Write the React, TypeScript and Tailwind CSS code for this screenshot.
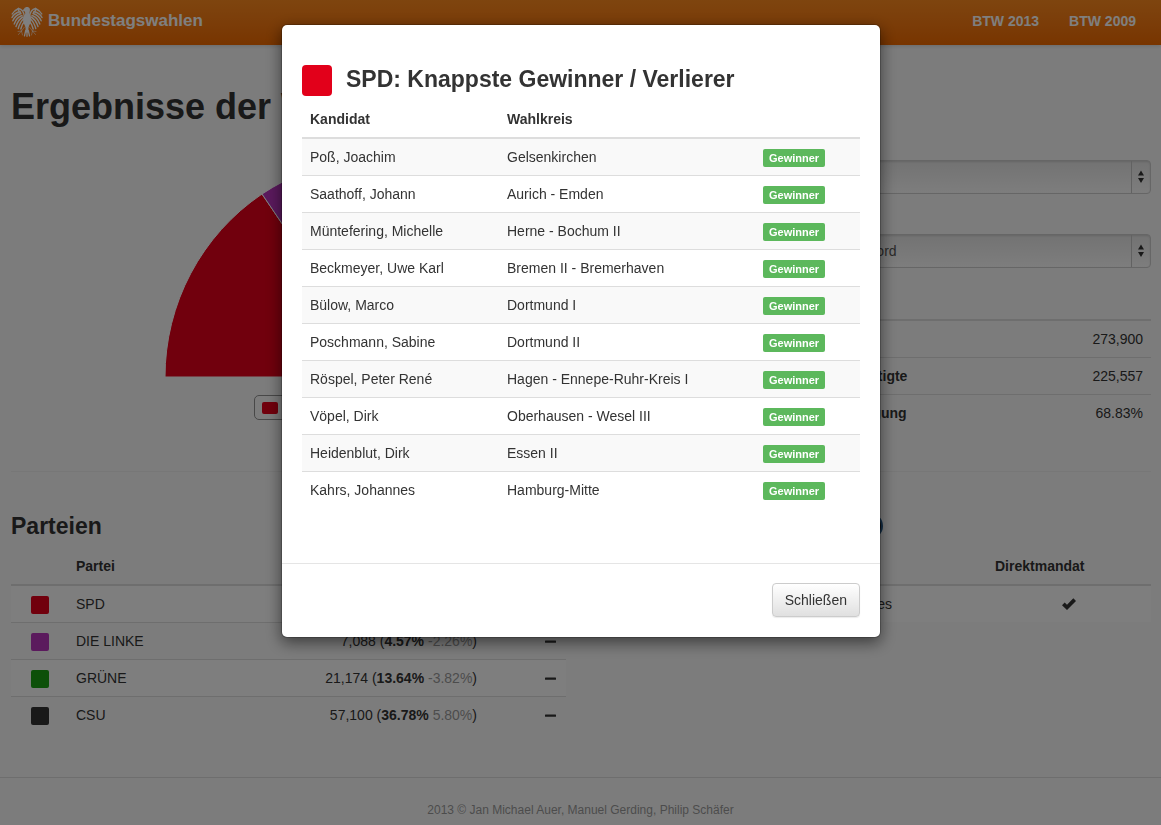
import React from "react";

const winners = [
  ["Poß, Joachim", "Gelsenkirchen"],
  ["Saathoff, Johann", "Aurich - Emden"],
  ["Müntefering, Michelle", "Herne - Bochum II"],
  ["Beckmeyer, Uwe Karl", "Bremen II - Bremerhaven"],
  ["Bülow, Marco", "Dortmund I"],
  ["Poschmann, Sabine", "Dortmund II"],
  ["Röspel, Peter René", "Hagen - Ennepe-Ruhr-Kreis I"],
  ["Vöpel, Dirk", "Oberhausen - Wesel III"],
  ["Heidenblut, Dirk", "Essen II"],
  ["Kahrs, Johannes", "Hamburg-Mitte"],
];

const parties = [
  { name: "SPD", color: "bg-[#e2001a]", votes: "46,612", share: "30.02%", diff: "4.21%" },
  { name: "DIE LINKE", color: "bg-[#b634bb]", votes: "7,088", share: "4.57%", diff: "-2.26%" },
  { name: "GRÜNE", color: "bg-[#1aa012]", votes: "21,174", share: "13.64%", diff: "-3.82%" },
  { name: "CSU", color: "bg-[#333333]", votes: "57,100", share: "36.78%", diff: "5.80%" },
];

const stats = [
  ["Einwohner", "273,900"],
  ["Wahlberechtigte", "225,557"],
  ["Wahlbeteiligung", "68.83%"],
];

function Wing() {
  return (
    <>
      <g strokeWidth="1.4" strokeLinecap="round">
        <path d="M13.500 12C13 7.500 10.500 4 7.500 3.500C7 5 8 6.500 9.500 7.500" />
        <path d="M7.500 3.500C4.500 5 2.500 6.500 1.200 9" />
        <path d="M9 6.500C5.500 7.500 2.500 9.500 1 12.500" />
        <path d="M10 8.500C6.500 9.500 3.500 12 1.800 15.800" />
        <path d="M11 10.500C7.500 11.500 4.800 14.500 3.200 19" />
        <path d="M12 12C9 13.500 6.500 17 5 21.500" />
        <path d="M13 13.500C10.500 15.500 8.500 19 7.200 23.500" />
        <path d="M13.800 16C12 18 10.500 20.500 9.800 24" />
      </g>
      <g strokeWidth="1" strokeLinecap="round" opacity=".55">
        <path d="M13.500 22L10.500 26M10.500 26L7 26.500M10.500 26L7.500 29.500M10.500 26L11.500 30" />
      </g>
    </>
  );
}

function Eagle() {
  return (
    <svg viewBox="0 0 32 32" className="size-8" fill="none" stroke="#fff" aria-hidden="true">
      <Wing />
      <g transform="matrix(-1 0 0 1 32 0)">
        <Wing />
      </g>
      <path
        fill="#fff"
        stroke="none"
        d="M11.500 5.500L13.300 3.500C14 1.800 18 1.300 18.800 3.800C19.300 5.500 18.400 7 18.600 8.500C18.800 10 20 11 20 14C20 17.500 18.500 19.500 17.600 22L17.200 27.500H14.800L14.400 22C13.500 19.500 12 17.500 12 14C12 11 13.800 10.500 14.200 8.700C14.400 7.300 13.800 6.300 12.800 6Z"
      />
      <g strokeWidth="1.300" strokeLinecap="round">
        <path d="M16 25V31.300M14.700 25.500L13.500 30.800M17.300 25.500L18.500 30.800" />
      </g>
    </svg>
  );
}

function SelectBox({ id, label, value }: { id: string; label: string; value: string }) {
  return (
    <div className="mb-[15px]">
      <label htmlFor={id} className="mb-[5px] block font-bold">
        {label}
      </label>
      <div className="relative">
        <select
          id={id}
          className="block h-[34px] w-full appearance-none rounded border border-[#ccc] bg-linear-to-b from-[#e6e6e6] to-[#fbfbfb] px-3 text-[#555] shadow-[inset_0_1px_2px_rgba(0,0,0,0.12)]"
        >
          <option>{value}</option>
        </select>
        <svg
          viewBox="0 0 20 34"
          className="pointer-events-none absolute top-0 right-0 h-[34px] w-5"
          aria-hidden="true"
        >
          <path d="M.5 1V33" stroke="#c4c4c4" />
          <path d="M7 15.500L10 10.500L13 15.500ZM7 18L10 23L13 18Z" fill="#333" />
        </svg>
      </div>
    </div>
  );
}

function Chart() {
  return (
    <div className="flex flex-col items-center pt-[21px]">
      <svg viewBox="0 0 442 221" className="h-[221px] w-[442px]" role="img" aria-label="Zweitstimmen">
        <g stroke="#fff" strokeWidth="1">
          <path d="M221 221L0 221A221 221 0 0 1 97 38Z" fill="#e2001a" />
          <path d="M221 221L97 38A221 221 0 0 1 142 15Z" fill="#b634bb" />
          <path d="M221 221L142 15A221 221 0 0 1 193 2Z" fill="#1aa012" />
          <path d="M221 221L193 2A221 221 0 0 1 442 221Z" fill="#333" />
        </g>
      </svg>
      <div className="mt-[18px] flex h-[25px] w-[264px] items-center justify-between rounded-[5px] border border-[#909090] px-[7px] text-xs">
        {parties.map((p) => (
          <span key={p.name} className="flex items-center gap-1">
            <span className={`h-3 w-4 rounded-[2px] ${p.color}`} />
            {p.name === "DIE LINKE" ? "LINKE" : p.name}
          </span>
        ))}
      </div>
    </div>
  );
}

function Page() {
  return (
    <div className="flex min-h-screen flex-col bg-[#f9f9f9]">
      <nav className="h-[45px] bg-linear-to-b from-[#fd8a1e] to-[#f06a00] pr-[10px] pl-[11px] font-bold text-white shadow-[0_1px_4px_rgba(0,0,0,0.15)]">
        <div className="mx-auto flex h-full max-w-[1140px] items-center justify-between pb-1">
          <a href="#start" className="flex items-center gap-[5px] text-[17px]">
            <Eagle />
            Bundestagswahlen
          </a>
          <div className="flex gap-[30px] pr-[15px]">
            <a href="#btw2013">BTW 2013</a>
            <a href="#btw2009">BTW 2009</a>
          </div>
        </div>
      </nav>
      <main className="pt-[42px] pr-[10px] pl-[11px]">
        <div className="mx-auto max-w-[1140px]">
          <h1 className="text-4xl leading-10 font-bold">Ergebnisse der Wahl</h1>
          <div className="mt-2 grid grid-cols-[1fr_360px] gap-[30px]">
            <Chart />
            <div>
              <SelectBox id="land" label="Bundesland" value="Bayern" />
              <SelectBox id="kreis" label="Wahlkreis" value="München-Nord" />
              <table className="mb-5 w-full">
                <thead>
                  <tr>
                    <th colSpan={2} className="p-2 text-left">
                      Statistik
                    </th>
                  </tr>
                </thead>
                <tbody className="border-t-2 border-[#ddd]">
                  {stats.map(([name, value]) => (
                    <tr key={name} className="border-b border-[#ddd] last:border-b-0">
                      <th className="p-2 text-left">{name}</th>
                      <td className="p-2 text-right">{value}</td>
                    </tr>
                  ))}
                </tbody>
              </table>
            </div>
          </div>
          <hr className="mt-5 border-[#eee]" />
          <div className="mt-10 grid grid-cols-2 gap-[30px]">
            <section>
              <h3 className="mb-2 text-[23px] leading-7 font-bold">Parteien</h3>
              <table className="w-full table-fixed">
                <thead>
                  <tr className="text-left">
                    <th className="w-[57px] p-2" />
                    <th className="w-[140px] p-2">Partei</th>
                    <th className="p-2 text-right">Stimmen</th>
                    <th className="w-[81px] p-2 text-right">Mandate</th>
                  </tr>
                </thead>
                <tbody className="border-t-2 border-[#ddd]">
                  {parties.map((p) => (
                    <tr key={p.name} className="border-b border-[#ddd] last:border-b-0 odd:bg-[#fdfdfd]">
                      <td className="px-2 pt-[10px] pb-2">
                        <span className={`mx-auto block size-[18px] rounded-[2px] ${p.color}`} />
                      </td>
                      <td className="p-2">{p.name}</td>
                      <td className="p-2 text-right">
                        {p.votes} (<b>{p.share}</b> <span className="text-[#999]">{p.diff}</span>)
                      </td>
                      <td className="p-2">
                        <svg viewBox="0 0 14 14" className="ml-auto size-[14px]" aria-label="keine">
                          <rect x="1" y="6.500" width="11" height="2.200" rx=".5" fill="#333" />
                        </svg>
                      </td>
                    </tr>
                  ))}
                </tbody>
              </table>
            </section>
            <section>
              <div className="mb-2 flex h-7 w-[287px] items-center justify-between">
                <h3 className="text-[23px] leading-7 font-bold">Direktkandidaten</h3>
                <span className="size-[26px] rounded-full border-2 border-[#285e8e] bg-[#222]" />
              </div>
              <table className="w-full table-fixed">
                <thead>
                  <tr className="text-left">
                    <th className="w-[141px] p-2">Partei</th>
                    <th className="p-2">Kandidat</th>
                    <th className="w-[164px] p-2">Direktmandat</th>
                  </tr>
                </thead>
                <tbody className="border-t-2 border-[#ddd]">
                  <tr className="bg-[#fdfdfd]">
                    <td className="p-2">CSU</td>
                    <td className="p-2">Singhammer, Johannes</td>
                    <td className="p-2">
                      <svg viewBox="0 0 14 12" className="mx-auto h-3 w-[14px]" aria-label="ja">
                        <path d="M0 7.200L2.700 4.500L5 6.800L11.300 .3L14 3L5 12Z" fill="#333" />
                      </svg>
                    </td>
                  </tr>
                </tbody>
              </table>
            </section>
          </div>
        </div>
      </main>
      <footer className="mt-11 border-t border-[#ddd] px-[10px] pt-[22px] text-center text-xs leading-5 text-[#999]">
        2013 © Jan Michael Auer, Manuel Gerding, Philip Schäfer
      </footer>
    </div>
  );
}

function Modal() {
  return (
    <div className="fixed inset-0 bg-black/50 pt-6 pr-5 pl-[21px]">
      <div
        role="dialog"
        aria-modal="true"
        aria-labelledby="dialog-title"
        className="mx-auto max-w-[600px] rounded-md border border-black/20 bg-white bg-clip-padding shadow-[0_5px_15px_rgba(0,0,0,0.5)]"
      >
        <div className="px-5 pt-10 pb-[35px]">
          <div className="mb-2 flex h-7 items-start gap-[14px]">
            <span className="h-[31px] w-[30px] rounded bg-[#e2001a]" />
            <h3 id="dialog-title" className="text-[23px] leading-7 font-bold">
              SPD: Knappste Gewinner / Verlierer
            </h3>
          </div>
          <table className="mb-5 w-full table-fixed">
            <thead>
              <tr className="text-left">
                <th className="w-[197px] p-2">Kandidat</th>
                <th className="w-[256px] p-2">Wahlkreis</th>
                <th className="p-2" />
              </tr>
            </thead>
            <tbody className="border-t-2 border-[#ddd]">
              {winners.map(([name, district]) => (
                <tr key={name} className="border-b border-[#ddd] last:border-b-0 odd:bg-[#f9f9f9]">
                  <td className="p-2">{name}</td>
                  <td className="p-2">{district}</td>
                  <td className="px-2 pt-[10px] pb-2">
                    <span className="block h-[18px] w-fit rounded-[2px] bg-[#5cb85c] px-[6px] text-[11px] leading-[18px] font-bold text-white">
                      Gewinner
                    </span>
                  </td>
                </tr>
              ))}
            </tbody>
          </table>
        </div>
        <div className="flex justify-end border-t border-[#e5e5e5] px-5 pt-[19px] pb-5">
          <button
            type="button"
            className="h-[34px] rounded border border-[#ccc] bg-linear-to-b from-white to-[#e0e0e0] px-3 shadow-[0_1px_1px_rgba(0,0,0,0.08)]"
          >
            Schließen
          </button>
        </div>
      </div>
    </div>
  );
}

export default function App() {
  return (
    <div className="font-['Liberation_Sans',Arial,sans-serif] text-sm leading-5 text-[#333]">
      <Page />
      <Modal />
    </div>
  );
}
